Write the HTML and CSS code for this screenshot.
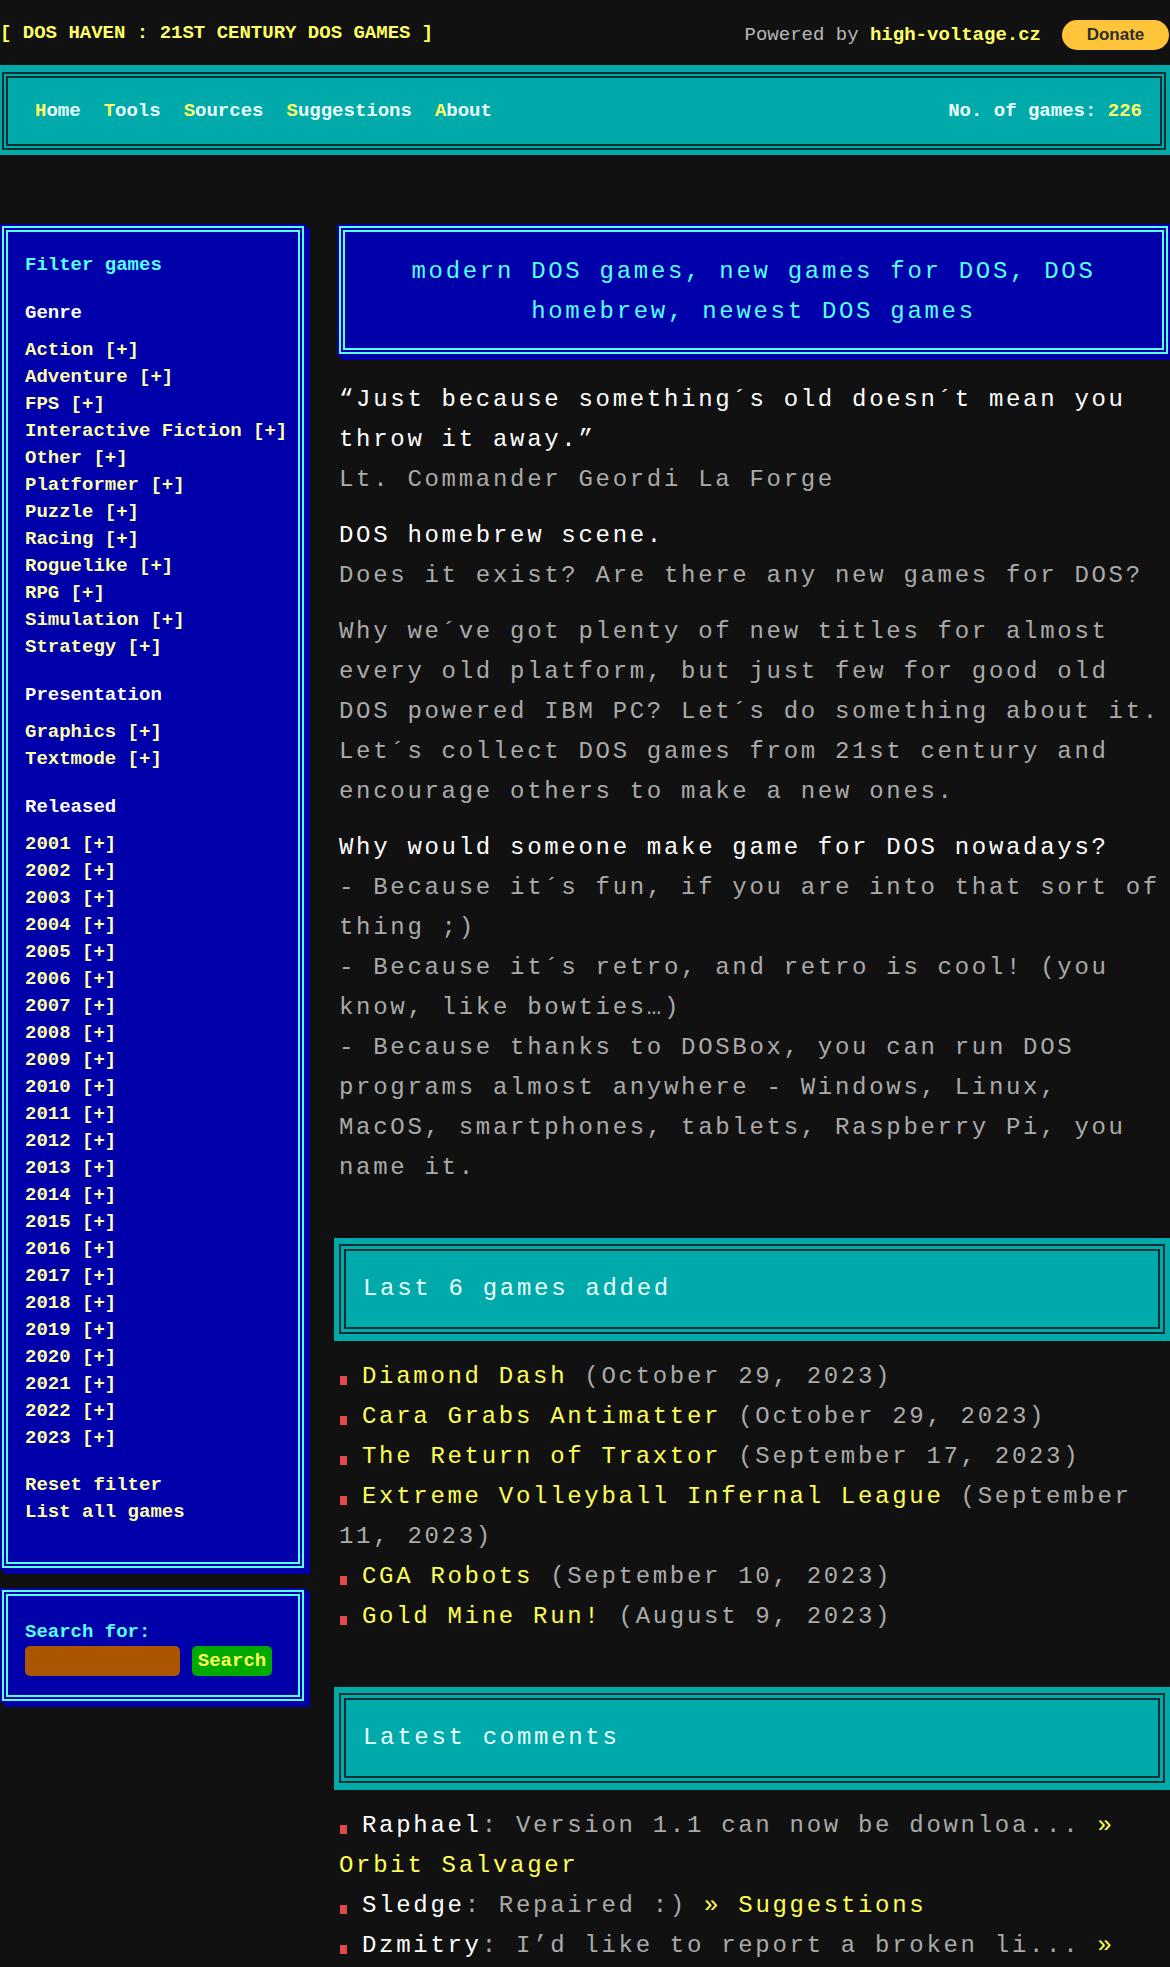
FILE: index.html
```html
<!DOCTYPE html>
<html lang="en">
<head>
<meta charset="utf-8">
<title>DOS Haven : 21st century DOS games</title>
<link rel="stylesheet" href="styles.css">
</head>
<body>
<header class="topbar">
  <div class="site-title">[ DOS HAVEN : 21ST CENTURY DOS GAMES ]</div>
  <div class="topbar-right">
    <span class="powered">Powered by <a class="hv" href="#">high-voltage.cz</a></span>
    <a class="donate" href="#">Donate</a>
  </div>
</header>

<nav class="nav">
  <div class="nav-inner">
    <div class="nav-links">
      <a href="#"><span class="hk">H</span>ome</a>
      <a href="#"><span class="hk">T</span>ools</a>
      <a href="#"><span class="hk">S</span>ources</a>
      <a href="#"><span class="hk">S</span>uggestions</a>
      <a href="#"><span class="hk">A</span>bout</a>
    </div>
    <div class="nav-count">No. of games: <span class="num">226</span></div>
  </div>
</nav>

<div class="layout">
  <aside class="sidebar">
    <div class="panel">
      <div class="panel-inner filter">
        <div class="side-title">Filter games</div>
        <div class="side-head">Genre</div>
        <ul class="side-list">
          <li><a href="#">Action [+]</a></li>
          <li><a href="#">Adventure [+]</a></li>
          <li><a href="#">FPS [+]</a></li>
          <li><a href="#">Interactive Fiction [+]</a></li>
          <li><a href="#">Other [+]</a></li>
          <li><a href="#">Platformer [+]</a></li>
          <li><a href="#">Puzzle [+]</a></li>
          <li><a href="#">Racing [+]</a></li>
          <li><a href="#">Roguelike [+]</a></li>
          <li><a href="#">RPG [+]</a></li>
          <li><a href="#">Simulation [+]</a></li>
          <li><a href="#">Strategy [+]</a></li>
        </ul>
        <div class="side-head sec">Presentation</div>
        <ul class="side-list">
          <li><a href="#">Graphics [+]</a></li>
          <li><a href="#">Textmode [+]</a></li>
        </ul>
        <div class="side-head sec">Released</div>
        <ul class="side-list">
          <li><a href="#">2001 [+]</a></li>
          <li><a href="#">2002 [+]</a></li>
          <li><a href="#">2003 [+]</a></li>
          <li><a href="#">2004 [+]</a></li>
          <li><a href="#">2005 [+]</a></li>
          <li><a href="#">2006 [+]</a></li>
          <li><a href="#">2007 [+]</a></li>
          <li><a href="#">2008 [+]</a></li>
          <li><a href="#">2009 [+]</a></li>
          <li><a href="#">2010 [+]</a></li>
          <li><a href="#">2011 [+]</a></li>
          <li><a href="#">2012 [+]</a></li>
          <li><a href="#">2013 [+]</a></li>
          <li><a href="#">2014 [+]</a></li>
          <li><a href="#">2015 [+]</a></li>
          <li><a href="#">2016 [+]</a></li>
          <li><a href="#">2017 [+]</a></li>
          <li><a href="#">2018 [+]</a></li>
          <li><a href="#">2019 [+]</a></li>
          <li><a href="#">2020 [+]</a></li>
          <li><a href="#">2021 [+]</a></li>
          <li><a href="#">2022 [+]</a></li>
          <li><a href="#">2023 [+]</a></li>
        </ul>
        <ul class="side-list sec-list">
          <li><a href="#">Reset filter</a></li>
          <li><a href="#">List all games</a></li>
        </ul>
      </div>
    </div>

    <div class="panel search-panel">
      <div class="panel-inner search">
        <div class="search-label">Search for:</div>
        <form class="search-row">
          <input class="search-input" type="text" aria-label="Search for">
          <button class="search-btn" type="button">Search</button>
        </form>
      </div>
    </div>
  </aside>

  <main class="main">
    <div class="panel hero">
      <div class="panel-inner hero-inner">
        <h1 class="hero-title">modern DOS games, new games for DOS, DOS homebrew, newest DOS games</h1>
      </div>
    </div>

    <p class="text first"><span class="white">“Just because something´s old doesn´t mean you throw it away.”</span><br>Lt. Commander Geordi La Forge</p>

    <p class="text"><span class="white">DOS homebrew scene.</span><br>Does it exist? Are there any new games for DOS?</p>

    <p class="text">Why we´ve got plenty of new titles for almost every old platform, but just few for good old DOS powered IBM PC? Let´s do something about it. Let´s collect DOS games from 21st century and encourage others to make a new ones.</p>

    <p class="text"><span class="white">Why would someone make game for DOS nowadays?</span><br>- Because it´s fun, if you are into that sort of thing ;)<br>- Because it´s retro, and retro is cool! (you know, like bowties…)<br>- Because thanks to DOSBox, you can run DOS programs almost anywhere - Windows, Linux, MacOS, smartphones, tablets, Raspberry Pi, you name it.</p>

    <div class="section-head">
      <h2 class="section-inner">Last 6 games added</h2>
    </div>
    <ul class="items">
      <li><a class="game" href="#">Diamond Dash</a> (October 29, 2023)</li>
      <li><a class="game" href="#">Cara Grabs Antimatter</a> (October 29, 2023)</li>
      <li><a class="game" href="#">The Return of Traxtor</a> (September 17, 2023)</li>
      <li><a class="game" href="#">Extreme Volleyball Infernal League</a> (September 11, 2023)</li>
      <li><a class="game" href="#">CGA Robots</a> (September 10, 2023)</li>
      <li><a class="game" href="#">Gold Mine Run!</a> (August 9, 2023)</li>
    </ul>

    <div class="section-head">
      <h2 class="section-inner">Latest comments</h2>
    </div>
    <ul class="items">
      <li><span class="name">Raphael</span>: Version 1.1 can now be downloa... <span class="game">»</span> <a class="game" href="#">Orbit Salvager</a></li>
      <li><span class="name">Sledge</span>: Repaired :) <span class="game">»</span> <a class="game" href="#">Suggestions</a></li>
      <li><span class="name">Dzmitry</span>: I’d like to report a broken li... <span class="game">»</span> <a class="game" href="#">Sources</a></li>
    </ul>
  </main>
</div>
</body>
</html>
```

FILE: styles.css
```css
* {
  box-sizing: border-box;
}

html,
body {
  margin: 0;
  padding: 0;
  background: #111111;
}

body {
  width: 1170px;
  overflow-x: hidden;
  font-family: "Liberation Mono", "DejaVu Sans Mono", monospace;
  color: #aaaaaa;
}

a {
  color: inherit;
  text-decoration: none;
}

/* ---------- top bar ---------- */
.topbar {
  height: 65px;
  display: flex;
  justify-content: space-between;
  align-items: center;
}

.site-title {
  font-size: 19px;
  font-weight: bold;
  color: #ffff66;
}

.topbar-right {
  display: flex;
  align-items: center;
  gap: 21px;
  margin-top: 4px;
}

.powered {
  font-size: 19px;
  color: #b8b8b8;
}

.powered .hv {
  color: #ffff66;
  font-weight: bold;
}

.donate {
  width: 107px;
  height: 30px;
  margin-right: 1px;
  border-radius: 15px;
  background: #ffc439;
  color: #2c2e2f;
  font-family: "Liberation Sans", Arial, sans-serif;
  font-weight: bold;
  font-size: 17px;
  display: flex;
  align-items: center;
  justify-content: center;
}

/* ---------- nav ---------- */
.nav {
  background: #00aaaa;
  padding: 7px 4px 5px 2px;
}

.nav-inner {
  border: 6px double #0f3030;
  padding: 19.5px 18px 19.5px 27px;
  display: flex;
  justify-content: space-between;
  align-items: center;
  font-size: 19px;
  line-height: 27px;
  font-weight: bold;
  color: #eaffff;
}

.nav-links {
  display: flex;
  gap: 23px;
}

.hk,
.num {
  color: #ffff66;
}

/* ---------- layout ---------- */
.layout {
  display: grid;
  grid-template-columns: 306px 836px;
  column-gap: 28px;
  margin-top: 69px;
  align-items: start;
}

/* ---------- panels ---------- */
.panel {
  background: #0000aa;
  padding: 2px;
  box-shadow: 4px 4px 0 #0000aa;
}

.panel-inner {
  border: 6px double #55ffff;
}

.filter {
  padding: 19.5px 6px 36px 17px;
  font-size: 19px;
  line-height: 27px;
  font-weight: bold;
  white-space: nowrap;
}

.side-title {
  color: #55ffff;
  margin-bottom: 21px;
}

.side-head {
  color: #ffffff;
  margin-bottom: 10px;
}

.side-head.sec {
  margin-top: 21px;
}

.side-list {
  list-style: none;
  margin: 0;
  padding: 0;
  color: #ffffaa;
}

.side-list.sec-list {
  margin-top: 20px;
}

.search-panel {
  margin-top: 18px;
}

.search {
  padding: 23px 16px 19px 17px;
  font-size: 19px;
  line-height: 27px;
  font-weight: bold;
}

.search-label {
  color: #55ffff;
}

.search-row {
  display: flex;
  gap: 12px;
  margin: 0;
}

.search-input {
  width: 155px;
  height: 30px;
  border: none;
  border-radius: 5px;
  background: #aa5500;
  padding: 0;
}

.search-btn {
  width: 80px;
  height: 30px;
  border: none;
  border-radius: 5px;
  background: #00aa00;
  color: #ffff55;
  font-family: "Liberation Mono", "DejaVu Sans Mono", monospace;
  font-size: 19px;
  font-weight: bold;
  padding: 0;
}

/* ---------- main ---------- */
.main {
  font-size: 24px;
  line-height: 40px;
  letter-spacing: 2.7px;
}

.hero {
  margin-left: 3px;
}

.hero-inner {
  padding: 20px 10px 16px;
}

.hero-title {
  margin: 0;
  font-size: 24px;
  font-weight: normal;
  line-height: 40px;
  color: #55ffff;
  text-align: center;
}

.text {
  margin: 0 0 16px;
  padding-left: 5px;
  color: #aaaaaa;
}

.text.first {
  margin-top: 24px;
}

.white {
  color: #ffffff;
}

.section-head {
  margin-top: 50px;
  background: #00aaaa;
  padding: 6px 5px 7px 5px;
}

.section-inner {
  margin: 0;
  border: 7px double #0f3030;
  padding: 18px 18px 18px 17px;
  font-size: 24px;
  font-weight: normal;
  line-height: 40px;
  color: #eaffff;
}

.items {
  list-style: none;
  margin: 16px 0 0;
  padding: 0 0 0 5px;
  color: #aaaaaa;
}

.items li::before {
  content: "";
  display: inline-block;
  width: 7px;
  height: 9px;
  margin-left: 1px;
  margin-right: 15px;
  background: #e04a4a;
  vertical-align: -2px;
}

.game {
  color: #ffff55;
}

.name {
  color: #ffffff;
}
```
